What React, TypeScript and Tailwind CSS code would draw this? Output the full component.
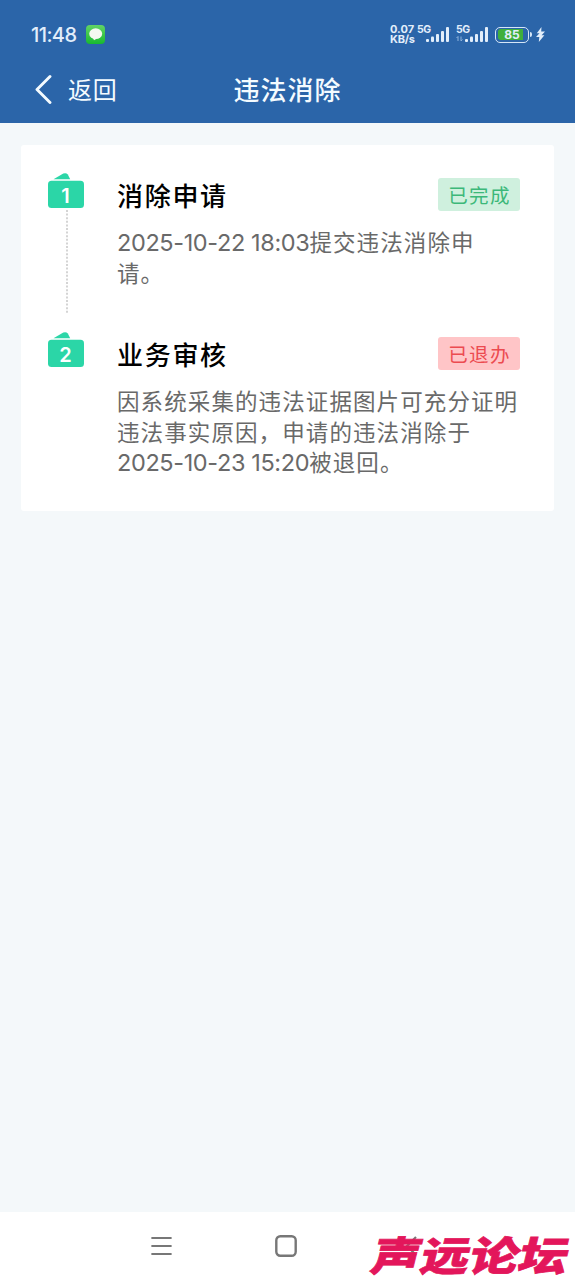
interface Step {
  no: number;
  title: string;
  status: string;
  badgeClass: string;
  before: string;
  time: string;
  after: string;
}

const steps: Step[] = [
  {
    no: 1,
    title: "消除申请",
    status: "已完成",
    badgeClass: "bg-[#cff0de] text-[#3cb879]",
    before: "",
    time: "2025-10-22 18:03",
    after: "提交违法消除申请。",
  },
  {
    no: 2,
    title: "业务审核",
    status: "已退办",
    badgeClass: "bg-[#ffc5c7] text-[#ec4b50]",
    before: "因系统采集的违法证据图片可充分证明违法事实原因，申请的违法消除于",
    time: "2025-10-23 15:20",
    after: "被退回。",
  },
];

function MessageIcon() {
  return (
    <svg className="ml-[10px] h-[19px] w-[19px]" viewBox="0 0 19 19">
      <defs>
        <linearGradient id="msg" x1="0" y1="0" x2="0" y2="1">
          <stop offset="0" stopColor="#62d465" />
          <stop offset="1" stopColor="#18b92f" />
        </linearGradient>
      </defs>
      <rect width="19" height="19" rx="4" fill="url(#msg)" />
      <ellipse cx="9.7" cy="8.7" rx="6.5" ry="5.4" fill="#f3f8ef" />
      <path d="M7 12.8 8 15.2 11 13.6z" fill="#f3f8ef" />
    </svg>
  );
}

function Signal({ data }: { data?: boolean }) {
  return (
    <div className="relative h-[17px] w-[33px]">
      <span className="absolute -top-[2px] left-0 font-['Inter'] text-[10.5px] leading-[11px] font-bold tracking-[-0.4px]">
        5G
      </span>
      <svg className="h-[17px] w-[33px]" viewBox="0 0 33 17" fill="#e2eefb">
        <rect x="9" y="13" width="3" height="3" rx="1" />
        <rect x="14" y="10.5" width="3" height="5.5" rx="1" />
        <rect x="19" y="8" width="3" height="8" rx="1" />
        <rect x="24" y="5" width="3" height="11" rx="1" />
        <rect x="29" y="1" width="3" height="15" rx="1" />
        {data && (
          <path d="M2 15v-4.5L.5 12M5 10.5V15l1.5-1.5" fill="none" stroke="#8fb4dc" strokeWidth="1" />
        )}
      </svg>
    </div>
  );
}

function StatusBar() {
  return (
    <div className="flex h-[56px] items-center pt-[13px] pr-[30px] pl-[31px] text-[#e2eefb]">
      <span className="w-[45px] font-['Inter'] text-[20px] leading-none font-medium tracking-[-0.6px]">11:48</span>
      <MessageIcon />
      <div className="ml-auto flex items-center">
        <div className="w-[27px] font-['Inter'] text-[11px] leading-[9.5px] font-bold">
          <div>0.07</div>
          <div className="tracking-[-0.2px]">KB/s</div>
        </div>
        <Signal />
        <div className="w-[6px]" />
        <Signal data />
        <div className="ml-[6px] flex h-[16px] w-[34px] items-center rounded-[5px] border-[1.5px] border-[#d5e6f7] p-[1.5px]">
          <div className="flex h-full w-full items-center justify-center rounded-[3px] bg-linear-to-r from-[#3faf3d] from-85% to-[#2b65a9] to-85% font-['Inter'] text-[12px] leading-none font-bold">
            85
          </div>
        </div>
        <div className="ml-[1px] h-[5px] w-[2px] rounded-r bg-[#d5e6f7]" />
        <svg className="ml-[4px] h-[15px] w-[9px]" viewBox="0 0 9 15" fill="#e2eefb">
          <path d="M5.5 0 .8 6.2h2.7L0 10h3.3L2.8 15 8.4 8.2H5.6L9 4.6H5.2z" />
        </svg>
      </div>
    </div>
  );
}

function StepIcon({ no }: { no: number }) {
  return (
    <svg className="h-[37px] w-[36px]" viewBox="0 0 36 37">
      <path d="M5.5 6.3 15.3.6Q18-.6 19.8 1.6L22.2 6.3z" fill="#2bd6a7" />
      <rect y="7.8" width="36" height="27.3" rx="3.5" fill="#2bd6a7" />
      <text x="17.5" y="30" textAnchor="middle" fill="#fff" className="font-['Inter'] text-[20px] font-semibold">
        {no}
      </text>
    </svg>
  );
}

function StepRow({ step, last }: { step: Step; last: boolean }) {
  return (
    <div className={`flex ${last ? "" : "h-[159px]"}`}>
      <div className="flex w-[69px] shrink-0 flex-col items-start">
        <StepIcon no={step.no} />
        {!last && (
          <svg className="ml-[18px] h-[104px] w-[2px]" viewBox="0 0 2 104">
            <path d="M1 0V104" stroke="#c6c6c6" strokeWidth="1.5" strokeDasharray="2 1.6" />
          </svg>
        )}
      </div>
      <div className="w-[403px] shrink-0">
        <div className="flex h-[43px] items-center justify-between">
          <h2 className="text-[26px] leading-none font-medium tracking-[1.7px] text-black">{step.title}</h2>
          <span
            className={`flex h-[33px] w-[82px] items-center justify-center rounded-[3px] pl-[1px] text-[19.5px] leading-none tracking-[1.3px] ${step.badgeClass}`}
          >
            {step.status}
          </span>
        </div>
        <p className={`mt-[10px] text-[22.5px] leading-[30.5px] tracking-[1.1px] text-[#696969] ${last ? "" : "pr-[30px]"}`}>
          {step.before}
          <span className="font-['Inter'] text-[23.5px] leading-none tracking-[-0.38px] whitespace-nowrap">
            {step.time}
          </span>
          {step.after}
        </p>
      </div>
    </div>
  );
}

export default function App() {
  return (
    <div className="flex h-[1280px] w-[575px] flex-col overflow-hidden bg-[#f4f8fa] font-['Noto_Sans_CJK_SC',sans-serif]">
      <header className="h-[123px] shrink-0 bg-[#2b65a9] text-[#f4fbff]">
        <StatusBar />
        <div className="grid h-[65px] grid-cols-3 items-center">
          <div className="flex items-center pl-[34px]">
            <svg className="h-[30px] w-[19px]" viewBox="0 0 19 30" fill="none" stroke="currentColor" strokeWidth="2.9">
              <path d="M16 2.5 3 15.5l13 13" strokeLinecap="round" strokeLinejoin="round" />
            </svg>
            <span className="ml-[15px] text-[24px] leading-none tracking-[0.8px]">返回</span>
          </div>
          <h1 className="text-center text-[26px] leading-none font-medium tracking-[1px]">违法消除</h1>
        </div>
      </header>

      <main className="flex-1 px-[21px] pt-[22px]">
        <section className="h-[366px] rounded-[3px] bg-white pt-[28px] pl-[27px]">
          {steps.map((step, i) => (
            <StepRow key={step.no} step={step} last={i === steps.length - 1} />
          ))}
        </section>
      </main>

      <nav className="relative flex h-[68px] shrink-0 items-center bg-white text-[#777]">
        <svg className="ml-[151px] h-[22px] w-[21px]" viewBox="0 0 21 22" stroke="currentColor" strokeWidth="2.2" strokeLinecap="round">
          <path d="M1.2 3h18.6M1.2 11h18.6M1.2 19h18.6" />
        </svg>
        <svg className="ml-[103px] h-[22px] w-[22px]" viewBox="0 0 22 22" fill="none" stroke="currentColor" strokeWidth="2.4">
          <rect x="1.3" y="1.3" width="19.4" height="19.4" rx="4" />
        </svg>
        <svg className="ml-[107px] h-[20px] w-[14px]" viewBox="0 0 14 20" fill="none" stroke="currentColor" strokeWidth="2.2">
          <path d="M12 1 3 10l9 9" />
        </svg>
        <svg className="absolute top-[8px] left-[365px] h-[60px] w-[210px]" viewBox="0 0 210 60">
          <text
            x="0"
            y="0"
            textLength="196"
            lengthAdjust="spacingAndGlyphs"
            transform="translate(4 50.5) skewX(-14) scale(1 .9)"
            fill="#e3165b"
            stroke="#e3165b"
            strokeWidth="0.8"
            className="text-[45px] font-black"
          >
            声远论坛
          </text>
        </svg>
      </nav>
    </div>
  );
}
